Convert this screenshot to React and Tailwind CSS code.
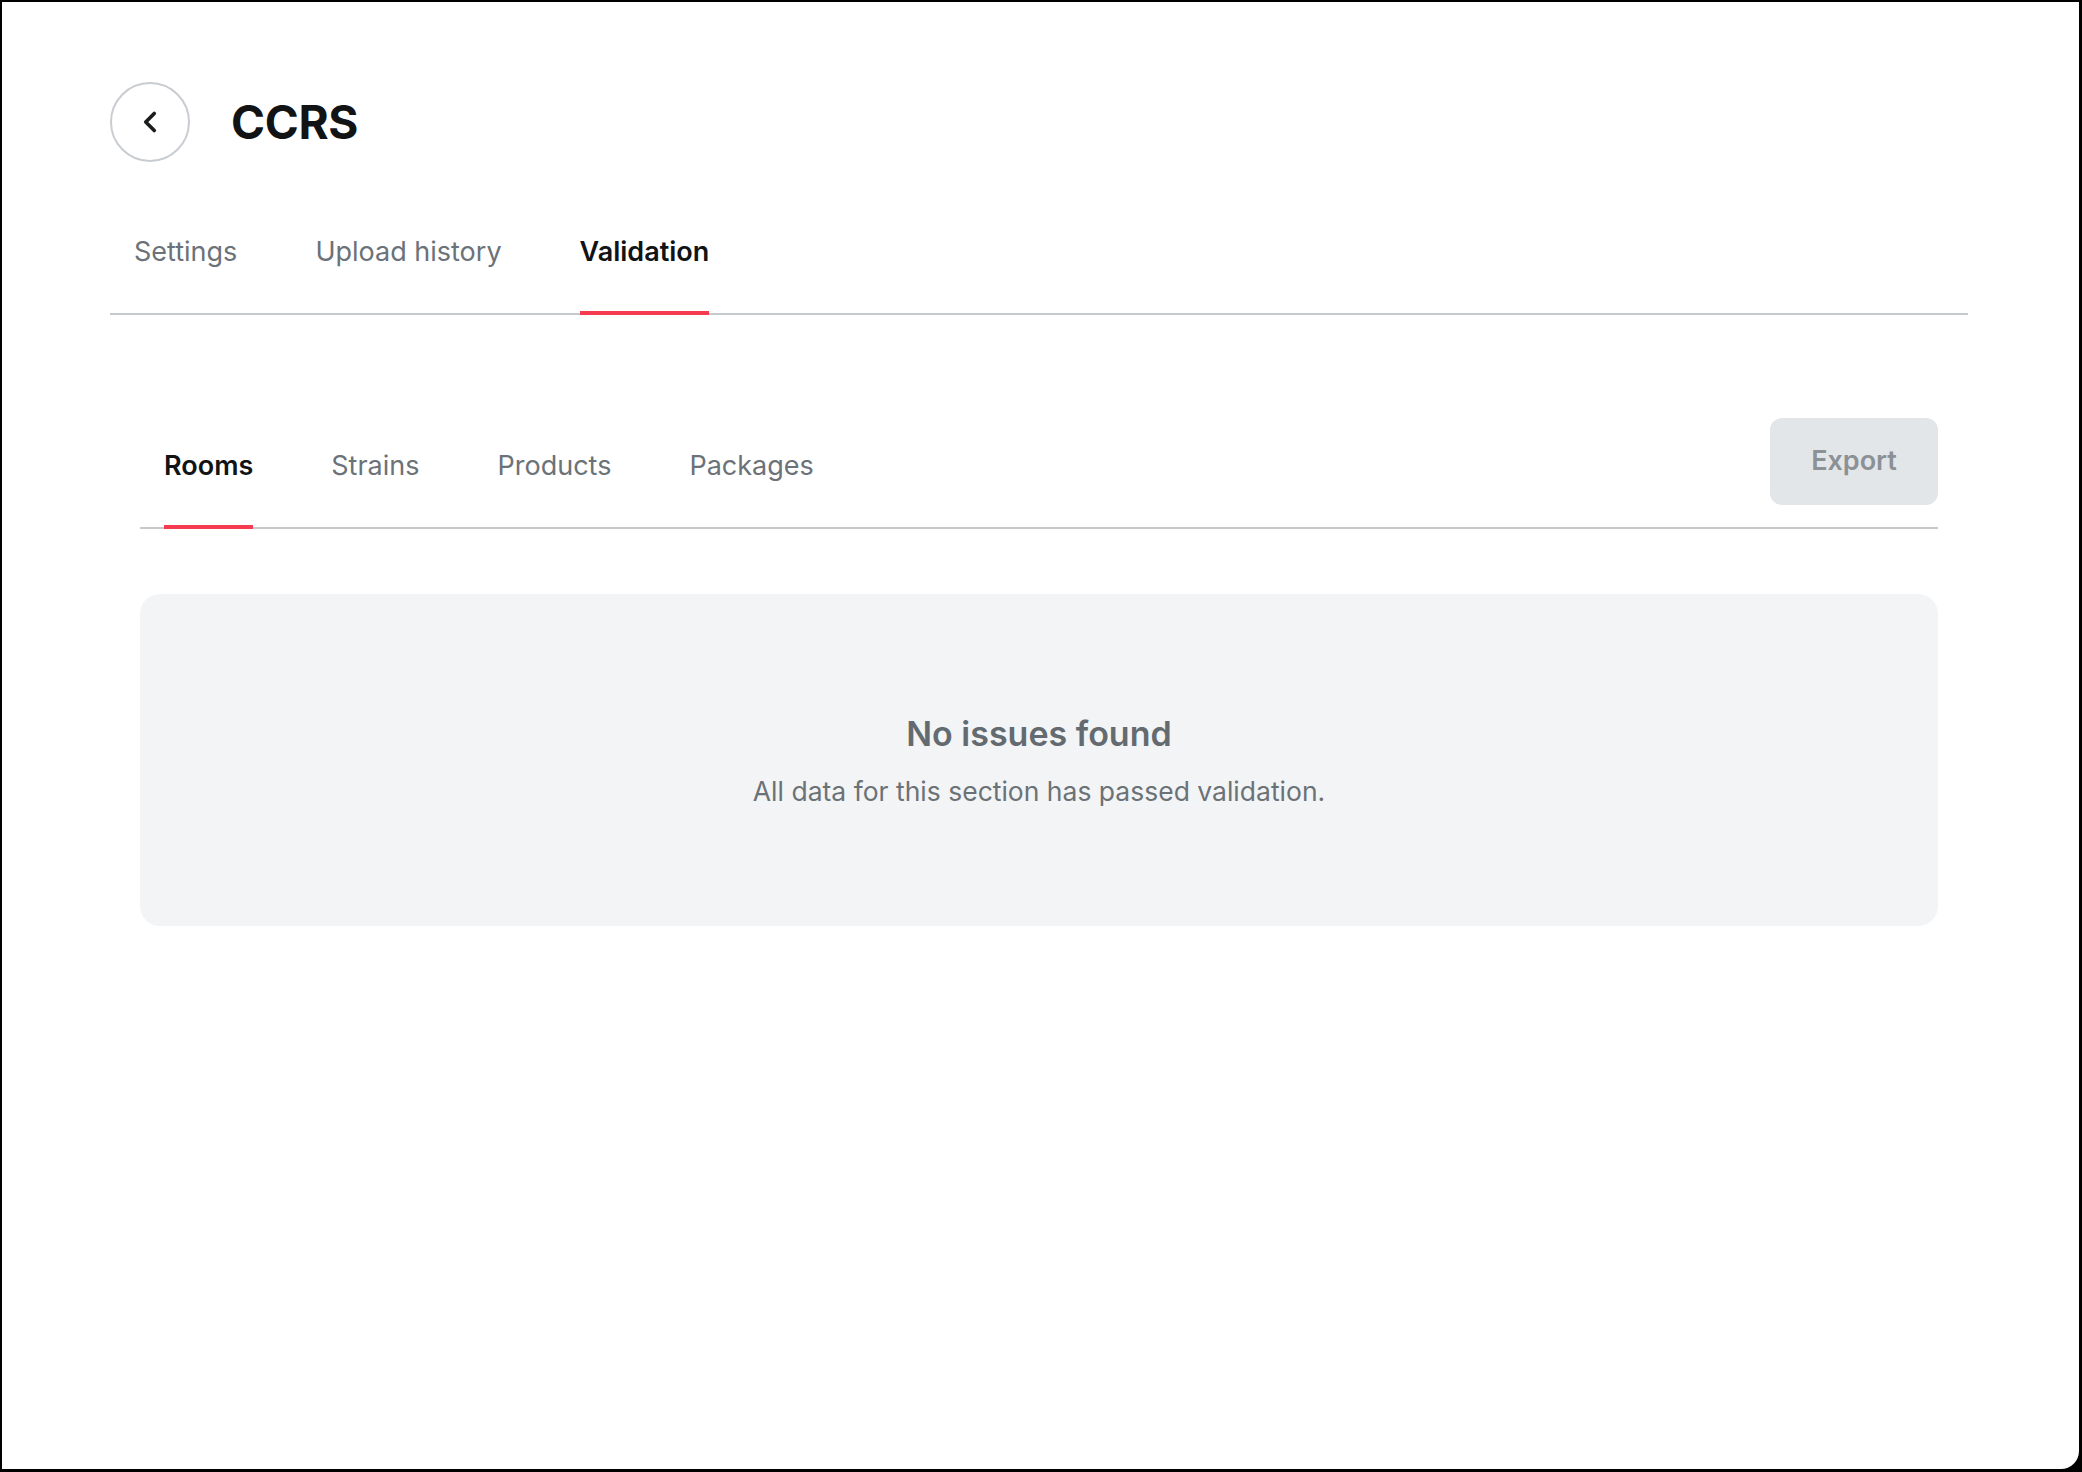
import { ChevronLeft } from 'lucide-react';

const topTabs = ['Settings', 'Upload history', 'Validation'];
const subTabs = ['Rooms', 'Strains', 'Products', 'Packages'];

const Tab = ({ label, active }) => (
  <button
    className={`-mb-[2px] border-b-4 pb-[44px] text-[27px] leading-[30px] ${
      active
        ? 'border-[#f43b4f] font-semibold text-[#111315]'
        : 'border-transparent text-[#6b7278]'
    }`}
  >
    {label}
  </button>
);

const App = () => {
  return (
    <div
      className="h-[1472px] w-[2082px] bg-black pt-[2px] pl-[2px] pr-[3px] pb-[3px]"
      style={{ fontFamily: 'Inter, "Noto Sans", sans-serif' }}
    >
      <div className="h-full w-full rounded-br-[18px] bg-white pl-[108px] pr-[111px] pt-[80px]">
        {/* Header */}
        <div className="flex items-center gap-[41px]">
          <button className="flex h-[80px] w-[80px] items-center justify-center rounded-full border-2 border-[#c9cdd1] text-[#1a1c1e]">
            <ChevronLeft className="h-[34px] w-[34px]" strokeWidth={2.6} />
          </button>
          <h1 className="text-[46px] font-bold tracking-[-0.3px] text-[#111315]">CCRS</h1>
        </div>

        {/* Top tabs */}
        <div className="mt-[75px] flex gap-[78px] border-b-2 border-[#c6cacd] pl-[24px]">
          {topTabs.map((t) => (
            <Tab key={t} label={t} active={t === 'Validation'} />
          ))}
        </div>

        {/* Section */}
        <div className="mt-[103px] px-[30px]">
          <div className="flex items-start justify-between border-b-2 border-[#c6cacd]">
            <div className="mt-[33px] flex gap-[78px] pl-[24px]">
              {subTabs.map((t) => (
                <Tab key={t} label={t} active={t === 'Rooms'} />
              ))}
            </div>
            <button className="h-[87px] w-[168px] rounded-[12px] bg-[#e3e6e9] text-[27px] font-semibold text-[#8b9195]">
              Export
            </button>
          </div>

          <div className="mt-[65px] flex h-[332px] flex-col items-center justify-center gap-[21px] rounded-[20px] bg-[#f3f4f6]">
            <div className="text-[34px] font-semibold leading-[40px] text-[#646b70]">No issues found</div>
            <div className="text-[26.5px] leading-[32px] text-[#6b7276]">
              All data for this section has passed validation.
            </div>
          </div>
        </div>
      </div>
    </div>
  );
};

export default App;
